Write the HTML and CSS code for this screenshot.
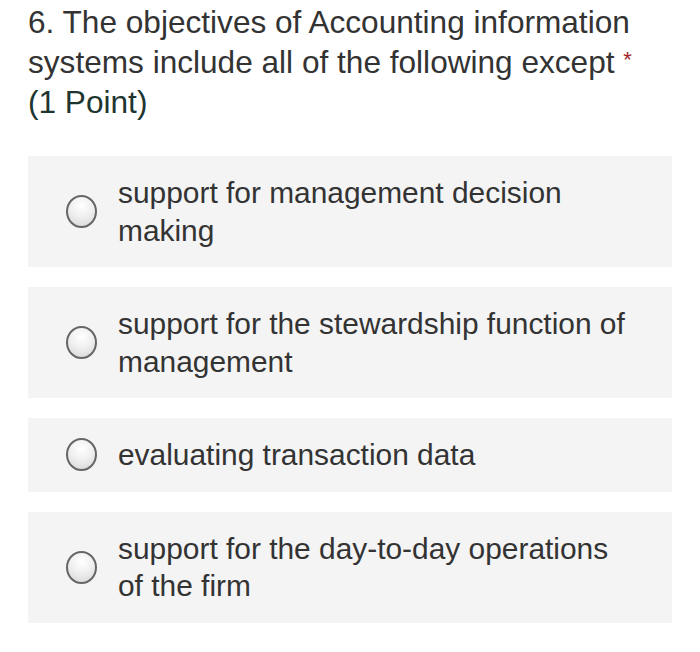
FILE: index.html
```html
<!DOCTYPE html>
<html>
<head>
<meta charset="utf-8">
<link rel="stylesheet" href="styles.css">
</head>
<body>
<div class="question">
  <div class="title">6. The objectives of Accounting information systems include all of the following except <span class="req">*</span></div>
  <div class="points">(1 Point)</div>
</div>
<div class="options">
  <div class="option"><span class="radio"></span><span class="label">support for management decision making</span></div>
  <div class="option"><span class="radio"></span><span class="label">support for the stewardship function of management</span></div>
  <div class="option"><span class="radio"></span><span class="label">evaluating transaction data</span></div>
  <div class="option"><span class="radio"></span><span class="label">support for the day-to-day operations of the firm</span></div>
</div>
</body>
</html>
```
FILE: styles.css
```css
html, body {
  margin: 0;
  padding: 0;
  background: #ffffff;
}
body {
  font-family: "Liberation Sans", Arial, sans-serif;
  color: #333333;
  padding: 2px 28px 0 28px;
}
.question {
  font-size: 31.6px;
  line-height: 40px;
  padding-right: 10px;
}
.req {
  color: #a4262c;
  font-size: 22px;
  line-height: 0;
  vertical-align: 6px;
}
.points {
  color: #1e3530;
}
.options {
  margin-top: 34px;
  display: flex;
  flex-direction: column;
  gap: 20px;
}
.option {
  background: #f4f4f4;
  display: flex;
  align-items: center;
  padding: 18px 40px 18px 38px;
}
.radio {
  flex: none;
  width: 31px;
  height: 33px;
  border: 2px solid #666666;
  border-radius: 50%;
  background: radial-gradient(circle at 50% 30%, #ffffff 0%, #f0f0f0 45%, #d4d4d4 100%);
  margin-right: 21px;
  box-sizing: border-box;
}
.label {
  font-size: 29.9px;
  line-height: 37.5px;
  color: #333333;
}
```
